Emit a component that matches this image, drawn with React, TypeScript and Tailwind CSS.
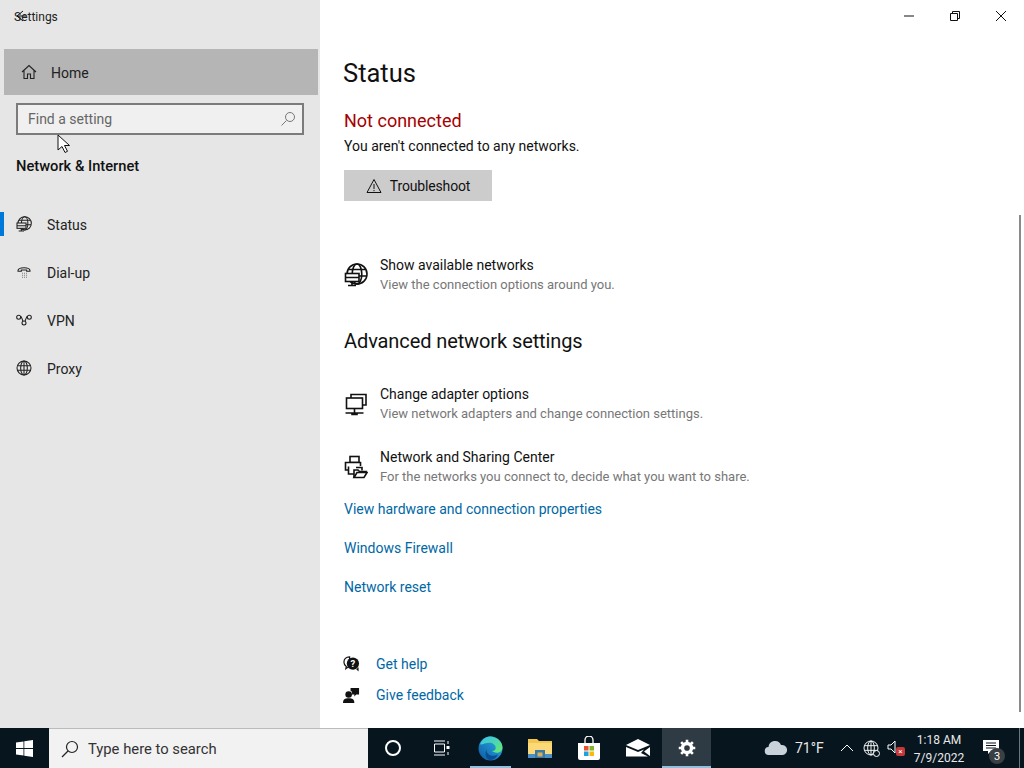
import type { ReactNode } from "react";

const font = { fontFamily: 'Roboto, "Noto Sans", sans-serif' };

function Icon({ size = 24, children, className = "" }: { size?: number; children: ReactNode; className?: string }) {
  return (
    <svg width={size} height={size} viewBox="0 0 24 24" fill="none" stroke="currentColor" strokeWidth="1.600" className={className}>
      {children}
    </svg>
  );
}

const StatusGlobe = ({ size = 16, bg }: { size?: number; bg: string }) => (
  <Icon size={size}>
    <circle cx="13" cy="11" r="10" />
    <ellipse cx="13" cy="11" rx="4.800" ry="10" />
    <path d="M4.500 6.500h17M22.500 13H13" />
    <rect x="1.500" y="10.500" width="13.500" height="8" fill={bg} />
    <path d="M1.500 14.500H15M8 18.500v3.500M4 22.500h8" />
  </Icon>
);

const navItems = [
  {
    label: "Status",
    icon: <StatusGlobe size={16} bg="#e6e6e6" />,
  },
  {
    label: "Dial-up",
    icon: (
      <Icon size={16}>
        <path d="M3 10c0-6 18-6 18 0v1h-5V9H8v2H3z" />
        <path d="M9 14h.8M12 14h.8M15 14h.8M9 17h.8M12 17h.8M15 17h.8M9 20h.8M12 20h.8M15 20h.8" />
      </Icon>
    ),
  },
  {
    label: "VPN",
    icon: (
      <Icon size={16}>
        <circle cx="4" cy="8" r="3" />
        <circle cx="20" cy="8" r="3" />
        <circle cx="12" cy="16.500" r="3" />
        <path d="M7 8c3 0 2 4 3.500 6M17 8c-3 0-2 4-3.500 6M7 7.500h2M15 7.500h2" />
      </Icon>
    ),
  },
  {
    label: "Proxy",
    icon: (
      <Icon size={16}>
        <circle cx="12" cy="12" r="10.500" />
        <ellipse cx="12" cy="12" rx="5" ry="10.500" />
        <path d="M2 8.500h20M2 15.500h20M12 1.500v21" />
      </Icon>
    ),
  },
];

function SideNav() {
  return (
    <aside className="relative w-[320px] shrink-0 bg-[#e6e6e6]">
      <div className="relative h-[49px] pl-[14px] pt-[9px] text-[12px] leading-[16px] text-[#222]">
        Settings
        <svg width="12" height="12" viewBox="0 0 12 12" fill="none" stroke="#111" strokeWidth="1" className="absolute left-[16px] top-[10px]">
          <path d="M7 1L1 6l6 5M1 6h9" />
        </svg>
      </div>
      <div className="ml-1 mr-0.5 flex h-[46px] items-center bg-[#b5b5b5] pl-[17px] text-[14px] text-[#222]">
        <svg width="16" height="16" viewBox="0 0 16 16" fill="none" stroke="#222" strokeWidth="1.100">
          <path d="M1 8l7-6.500L15 8M3 6.500V14.500H6.500V10h3v4.500H13V6.500" />
        </svg>
        <span className="ml-[14px] mt-[2px]">Home</span>
      </div>
      <div className="ml-4 mr-4 mt-[8px] flex h-[32px] w-[288px] items-center justify-between border-2 border-[#7b7b7b] bg-[#f0f0f0] pl-[10px] pr-[6px] text-[14px] text-[#666]">
        <span>Find a setting</span>
        <svg width="16" height="16" viewBox="0 0 16 16" fill="none" stroke="#777" strokeWidth="1">
          <circle cx="10" cy="6" r="4.500" />
          <path d="M6.500 9.500L1.500 14.500" />
        </svg>
      </div>
      <h2 className="ml-4 mt-[20px] text-[14.700px] font-medium leading-[22px] text-[#111]">Network &amp; Internet</h2>
      <nav className="mt-[23px] flex flex-col">
        {navItems.map((item, i) => (
          <div key={item.label} className="relative flex h-[48px] items-center pl-4 text-[14px] text-[#222]">
            {i === 0 && <span className="absolute left-0 top-3 h-6 w-1 bg-[#0078d7]" />}
            {item.icon}
            <span className="ml-[15px] mt-[2px]">{item.label}</span>
          </div>
        ))}
      </nav>
      {/* mouse pointer from the capture */}
      <svg width="14" height="20" viewBox="0 0 14 20" className="absolute left-[57px] top-[134px]">
        <path d="M1 1v15l4-3.500 3 6 2.500-1.200-3-5.800H12.500z" fill="#fff" stroke="#111" strokeWidth="1" />
      </svg>
    </aside>
  );
}

function Row({ icon, title, sub }: { icon: ReactNode; title: string; sub: string }) {
  return (
    <div className="flex">
      <div className="flex w-[36px] shrink-0 items-center">{icon}</div>
      <div>
        <div className="text-[14px] leading-[19px] text-[#111]">{title}</div>
        <div className="text-[13px] leading-[19px] text-[#777]">{sub}</div>
      </div>
    </div>
  );
}

function Content() {
  return (
    <main className="relative flex-1 bg-white pl-6 text-[#111]">
      <h1 className="-ml-px mt-[55px] text-[25.500px] leading-[37px]">Status</h1>
      <div className="mt-[17px] text-[18px] leading-[24px] text-[#a80000]">Not connected</div>
      <p className="mt-[3px] text-[14px] leading-[20px]">You aren't connected to any networks.</p>
      <button className="mt-[14px] flex h-[31px] w-[148px] items-center justify-center gap-[8px] bg-[#cccccc] pt-[2px] text-[14px] tracking-[-0.15px]">
        <svg width="16" height="16" viewBox="0 0 16 16" fill="none" stroke="#111" strokeWidth="1" className="-mt-[2px]">
          <path d="M8 1.500L15 14.500H1zM8 6v5M8 12v1.200" />
        </svg>
        Troubleshoot
      </button>
      <div className="mt-[55px]">
        <Row
          icon={<StatusGlobe size={24} bg="#ffffff" />}
          title="Show available networks"
          sub="View the connection options around you."
        />
      </div>
      <h2 className="mt-[32px] text-[20px] leading-[30px] tracking-[-0.1px]">Advanced network settings</h2>
      <div className="mt-[29px]">
        <Row
          icon={
            <Icon size={24}>
              <path d="M7 6V2.500h15V13h-3" />
              <rect x="2.500" y="6" width="16" height="10.500" />
              <path d="M10.500 16.500V21M1.500 21h18M8 21h5v1.500H8z" />
            </Icon>
          }
          title="Change adapter options"
          sub="View network adapters and change connection settings."
        />
      </div>
      <div className="mt-[25px]">
        <Row
          icon={
            <Icon size={24}>
              <rect x="6" y="1.500" width="9" height="6" />
              <path d="M4.500 15H1.500V7.500H16.500V11" fill="#fff" />
              <path d="M4.500 11.500V19H10" />
              <path d="M12 12.500h6v3" />
              <path d="M10 22.500V15h4l1.500 1.500H22l-.5 1" fill="#fff" />
              <path d="M10 22.500l3-5h10l-3 5z" fill="#fff" />
            </Icon>
          }
          title="Network and Sharing Center"
          sub="For the networks you connect to, decide what you want to share."
        />
      </div>
      <div className="mt-[13px] flex flex-col gap-[19px] text-[14px] leading-[20px] text-[#0067a5]">
        <a>View hardware and connection properties</a>
        <a>Windows Firewall</a>
        <a>Network reset</a>
      </div>
      <div className="mt-[57px] flex flex-col gap-[11px] text-[14px] leading-[20px] text-[#0067a5]">
        <div className="flex items-center gap-[16px]">
          <svg width="17" height="17" viewBox="0 0 18 18" className="-ml-px">
            <path d="M7 1C3 1 1 3.500 1 6.500c0 2 1 3.500 2.500 4.500L3 13.500l3-2h1z" fill="none" stroke="#111" strokeWidth="1.300" />
            <circle cx="10.500" cy="8" r="6.500" fill="#111" />
            <path d="M14 14l2.500 2.500V12z" fill="#111" />
            <text x="10.500" y="11.500" textAnchor="middle" fontSize="10" fontWeight="700" fill="#fff">?</text>
          </svg>
          <a>Get help</a>
        </div>
        <div className="flex items-center gap-[16px]">
          <svg width="17" height="17" viewBox="0 0 18 18" fill="#111" className="-ml-px">
            <circle cx="6" cy="8" r="3.500" />
            <path d="M0 17c0-4 2-5 6-5s6 1 6 5z" />
            <path d="M8 1h9v7h-3l-2 2V8H9.500C10 6 9.500 4.500 8 4z" />
          </svg>
          <a>Give feedback</a>
        </div>
      </div>

      {/* window buttons */}
      <div className="absolute right-0 top-0 flex h-8 text-[#111]">
        {[
          <path key="min" d="M0 5h10" />,
          <path key="max" d="M.5 2.500h7v7h-7zM2.500 2.500V.5h7v7h-2" />,
          <path key="close" d="M0 0l10 10M10 0L0 10" />,
        ].map((p, i) => (
          <div key={i} className="flex w-[46px] items-center justify-center">
            <svg width="10" height="10" viewBox="0 0 10 10" fill="none" stroke="#111" strokeWidth="1">
              {p}
            </svg>
          </div>
        ))}
      </div>
      {/* scrollbar */}
      <div className="absolute right-[3px] top-[215px] h-[497px] w-[2px] bg-[#8a8a8a]" />
    </main>
  );
}

function TaskIcon({ children, active, open }: { children: ReactNode; active?: boolean; open?: boolean }) {
  return (
    <div className={`relative flex h-10 w-[49px] items-center justify-center ${active ? "bg-[#2e3b44]" : ""}`}>
      {children}
      {(active || open) && (
        <span className={`absolute bottom-0 h-[2px] bg-[#8fc0e0] ${active ? "inset-x-0" : "inset-x-1"}`} />
      )}
    </div>
  );
}

function Taskbar() {
  return (
    <footer className="flex h-10 shrink-0 items-center bg-[#07151e] text-white">
      <div className="flex h-10 w-[49px] items-center justify-center">
        <svg width="17" height="17" viewBox="0 0 17 17" fill="#fff">
          <path d="M0 2.500L7.500 1.400V8H0zM8.300 1.300L17 0v8H8.300zM0 9h7.500v6.600L0 14.500zM8.300 9H17v8L8.300 15.700z" />
        </svg>
      </div>
      <div className="flex h-10 w-[319px] items-center border-t border-[#bbb] bg-[#f2f2f2] pl-[12px] text-[14.800px] text-[#333]">
        <svg width="18" height="18" viewBox="0 0 18 18" fill="none" stroke="#222" strokeWidth="1.200">
          <circle cx="11" cy="7" r="5.500" />
          <path d="M7 11L1 17" />
        </svg>
        <span className="ml-[9px] mt-[2px]">Type here to search</span>
      </div>
      <TaskIcon>
        <span className="h-[16px] w-[16px] rounded-full border-2 border-white" />
      </TaskIcon>
      <TaskIcon>
        <svg width="17" height="16" viewBox="0 0 17 16" fill="none" stroke="#fff" strokeWidth="1">
          <path d="M1 1h11M1 15h11M1.500 4h10v8h-10zM15 1v3M15 12v3" />
          <rect x="13.500" y="6" width="3" height="3" fill="#fff" stroke="none" />
        </svg>
      </TaskIcon>
      <TaskIcon open>
        <svg width="25" height="25" viewBox="0 0 24 24">
          <defs>
            <linearGradient id="edgeA" x1="0" y1="1" x2="1" y2="0">
              <stop offset="0" stopColor="#0c59a4" />
              <stop offset="1" stopColor="#2fb4e8" />
            </linearGradient>
            <linearGradient id="edgeB" x1="0" y1="0" x2="1" y2="1">
              <stop offset="0" stopColor="#35c1f1" />
              <stop offset="1" stopColor="#66eb6e" />
            </linearGradient>
          </defs>
          <circle cx="12" cy="12" r="11.500" fill="url(#edgeA)" />
          <path d="M2 8C4 2 9 .5 12 .5c6 0 11.500 5 11.500 10.500 0 3.500-3 5-5.500 5-2 0-4-.8-4.500-1.500 2 0 3.500-1.500 3.500-3 0-3-3-5-6-5-4 0-7 2-9 1.500z" fill="url(#edgeB)" />
          <path d="M8 13c0 4 3 6 6 6 2 0 4-.8 5-1.500-1 3-4 5.500-7 5.500-4 0-6-5-4-10z" fill="#0b4d92" />
        </svg>
      </TaskIcon>
      <TaskIcon>
        <svg width="24" height="22" viewBox="0 0 24 22">
          <path d="M0 2h9l2 2h13v17H0z" fill="#f3c64e" />
          <path d="M0 6h24v15H0z" fill="#fbd978" />
          <rect x="0" y="17" width="24" height="4" fill="#4a90c4" />
          <rect x="7" y="13" width="10" height="8" fill="#3b78a8" />
          <rect x="9.500" y="15.500" width="5" height="4" fill="#d7b05a" />
        </svg>
      </TaskIcon>
      <TaskIcon>
        <svg width="24" height="24" viewBox="0 0 24 24">
          <path d="M1 7h22v15a2 2 0 0 1-2 2H3a2 2 0 0 1-2-2z" fill="#fff" />
          <path d="M8 7V4a4 4 0 0 1 8 0v3" fill="none" stroke="#fff" strokeWidth="1.300" />
          <rect x="7" y="10" width="4.500" height="4.500" fill="#e8522c" />
          <rect x="12.500" y="10" width="4.500" height="4.500" fill="#7eb72d" />
          <rect x="7" y="15.500" width="4.500" height="4.500" fill="#1ea0e6" />
          <rect x="12.500" y="15.500" width="4.500" height="4.500" fill="#fbb80f" />
        </svg>
      </TaskIcon>
      <TaskIcon>
        <svg width="24" height="18" viewBox="0 0 24 18" fill="#fff">
          <path d="M12 0l12 6-12 5L0 6z" />
          <path d="M0 8l12 5 6-2.500-3 3.500 7 3.500H0zM24 8v9l-6-4.500z" />
        </svg>
      </TaskIcon>
      <TaskIcon active>
        <svg width="18" height="18" viewBox="0 0 24 24" fill="none" stroke="#fff" strokeWidth="4.500">
          <circle cx="12" cy="12" r="6" />
          <path d="M12 1v5M12 18v5M1 12h5M18 12h5M4.200 4.200l3.500 3.500M16.300 16.300l3.500 3.500M4.200 19.800l3.500-3.500M16.300 7.700l3.500-3.500" strokeWidth="3.500" />
        </svg>
      </TaskIcon>
      <div className="ml-auto flex h-10 items-center text-[14px]">
        <svg width="24" height="16" viewBox="0 0 24 16" fill="#c9d2d8">
          <path d="M5 15a4 4 0 0 1-.5-8A6.500 6.500 0 0 1 17 5a5 5 0 0 1 2 10z" />
        </svg>
        <span className="ml-[7px] w-[28px] whitespace-nowrap text-[#e8e8e8]">71°F</span>
        <svg width="14" height="8" viewBox="0 0 14 8" fill="none" stroke="#fff" strokeWidth="1" className="ml-[17px]">
          <path d="M1 7l6-6 6 6" />
        </svg>
        <div className="relative ml-[9px] h-4 w-4">
          <svg width="16" height="16" viewBox="0 0 24 24" fill="none" stroke="#fff" strokeWidth="1.400">
            <circle cx="12" cy="12" r="10.500" />
            <ellipse cx="12" cy="12" rx="5" ry="10.500" />
            <path d="M2 8.500h20M2 15.500h20M12 1.500v21" />
          </svg>
          <span className="absolute -bottom-px -right-px h-[7px] w-[7px] rounded-full border border-white bg-[#07151e]" />
        </div>
        <div className="relative ml-[8px] h-4 w-[18px]">
          <svg width="10" height="14" viewBox="0 0 10 14" fill="none" stroke="#fff" strokeWidth="1">
            <path d="M1 5h3l4-4v12L4 9H1z" />
          </svg>
          <span className="absolute bottom-0 right-0 flex h-[9px] w-[9px] items-center justify-center rounded-[2px] bg-[#c4383c] text-[8px] leading-none">×</span>
        </div>
        <div className="ml-[6px] mt-[1px] w-[56px] text-center text-[12px] leading-[18px] text-[#e8e8e8]">
          <div>1:18 AM</div>
          <div>7/9/2022</div>
        </div>
        <div className="relative ml-[16px] h-10 w-[30px]">
          <svg width="16" height="15" viewBox="0 0 16 15" fill="#fff" className="absolute left-0 top-[12px]">
            <path d="M0 0h16v11H8l-3 3v-3H0z" />
            <path d="M3 3h10M3 5.500h10M3 8h10" stroke="#07151e" strokeWidth="1" />
          </svg>
          <span className="absolute left-[6px] top-[20px] flex h-[16px] w-[16px] items-center justify-center rounded-full bg-[#3a3f44] text-[11px] leading-none">3</span>
        </div>
        <div className="ml-[6px] mr-[4px] h-10 w-px bg-[#6a7680]" />
      </div>
    </footer>
  );
}

export default function App() {
  return (
    <div className="flex h-[768px] w-[1024px] flex-col overflow-hidden" style={font}>
      <div className="flex min-h-0 flex-1">
        <SideNav />
        <Content />
      </div>
      <Taskbar />
    </div>
  );
}
